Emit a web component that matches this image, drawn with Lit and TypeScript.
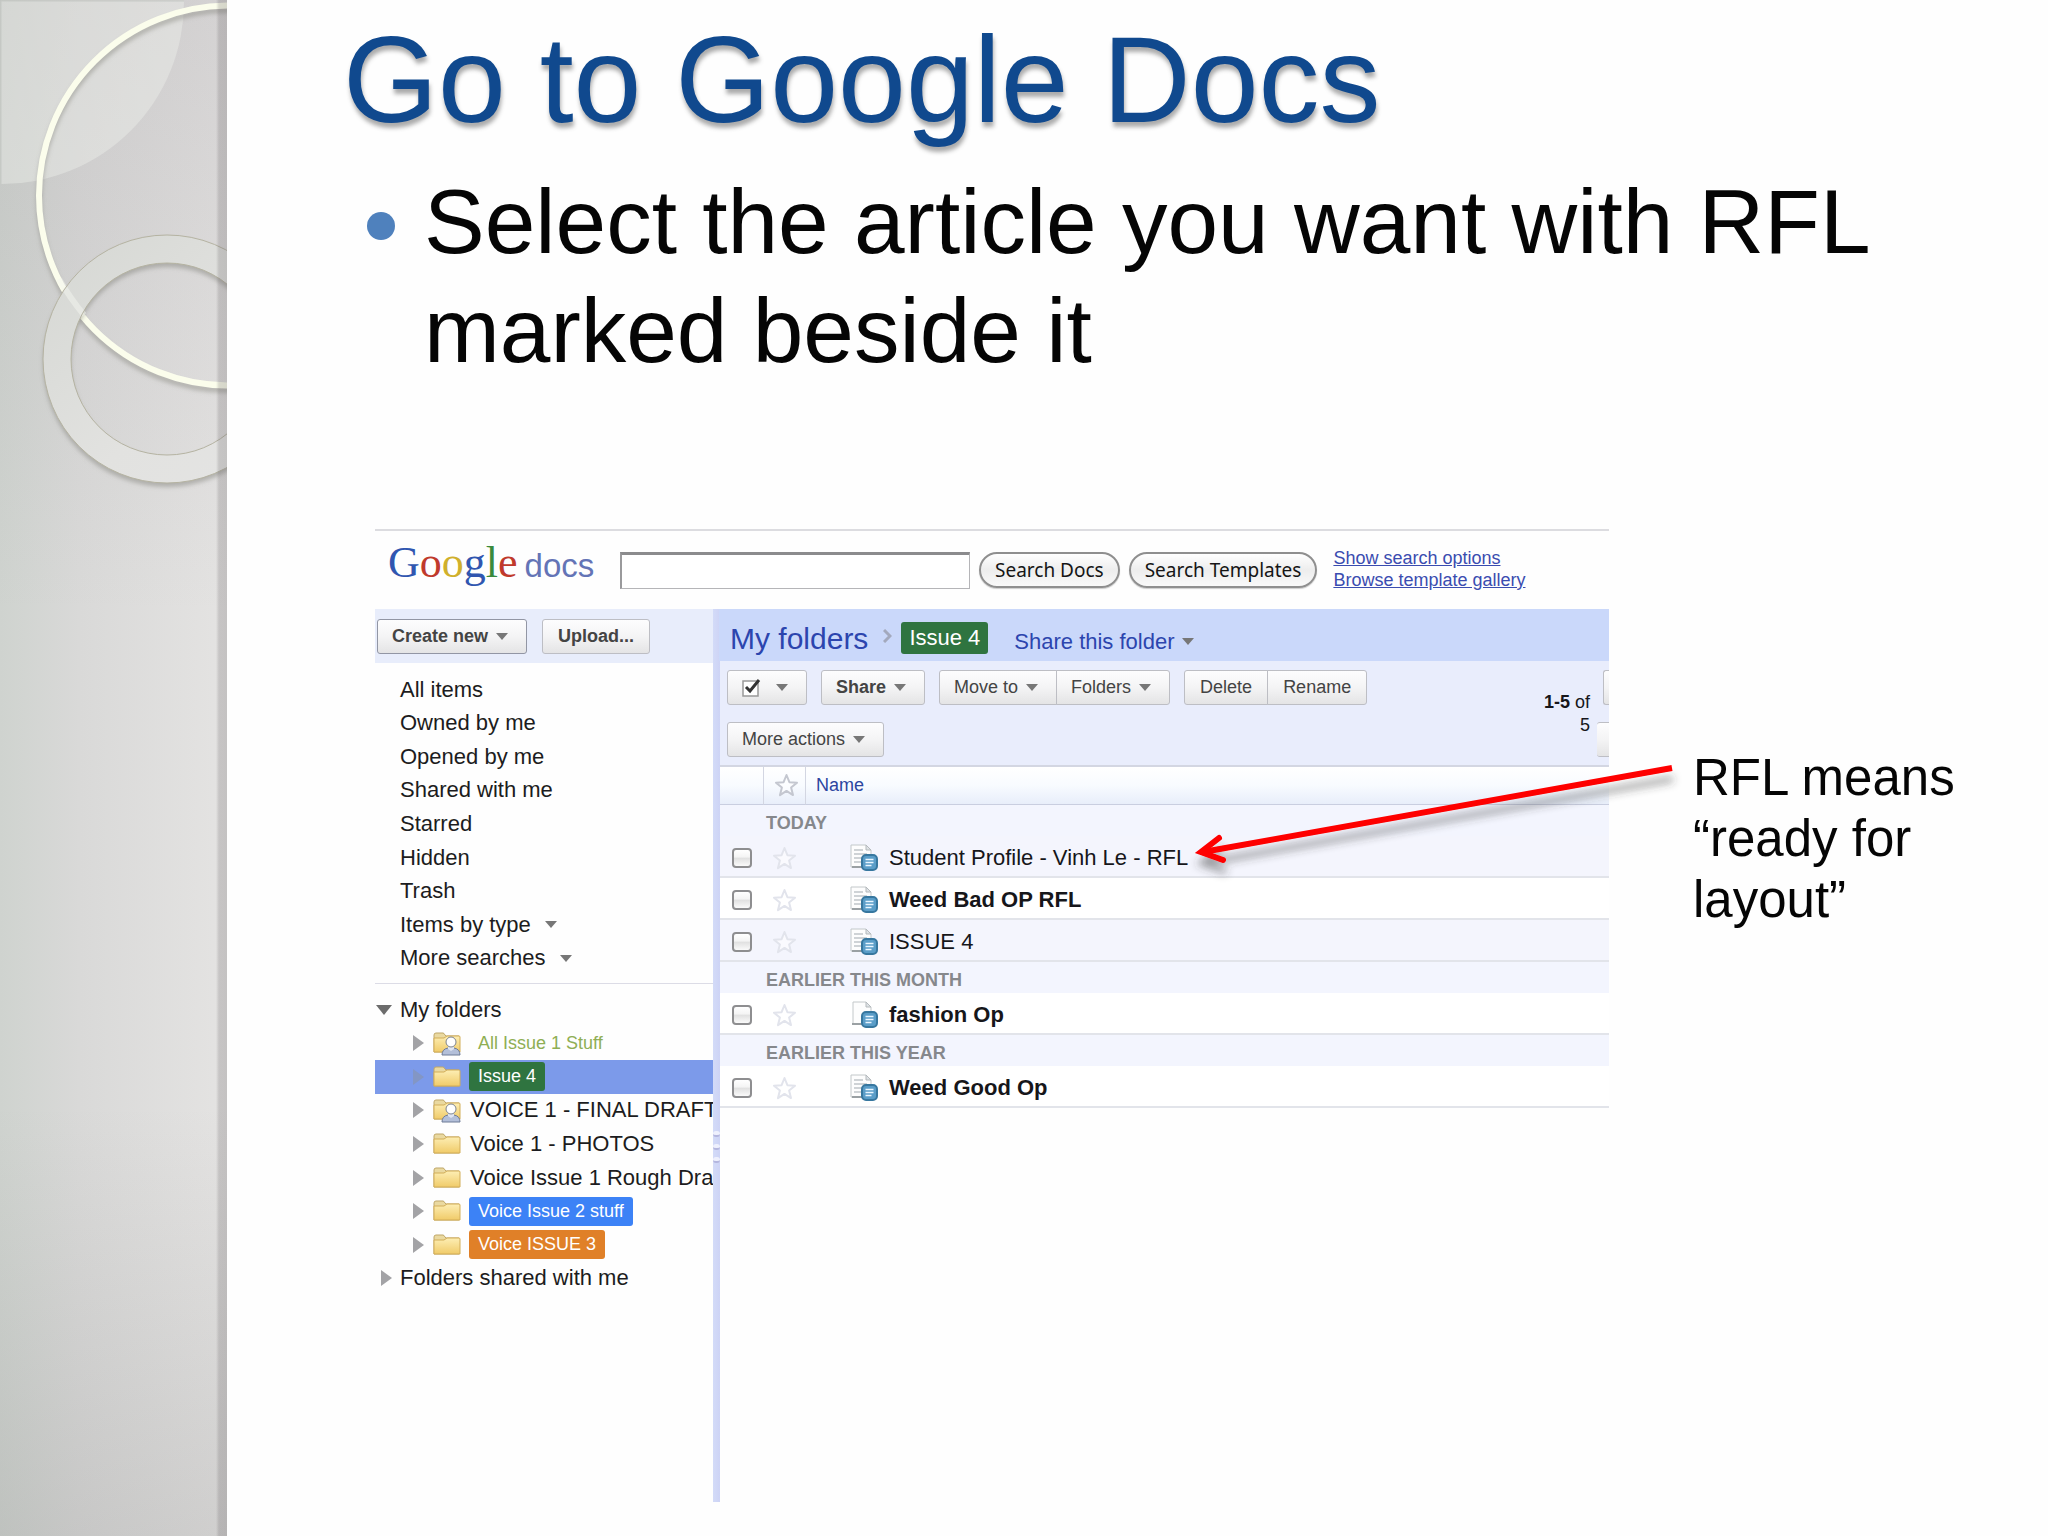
import { LitElement, html, css, svg, nothing } from "lit";
import { customElement, property } from "lit/decorators.js";
import { classMap } from "lit/directives/class-map.js";

const caret = html`<svg class="caret" width="12" height="7" viewBox="0 0 12 7" aria-hidden="true">
  <path d="M0 0h12L6 7z" fill="#777" />
</svg>`;

const star = (color: string) => html`<svg width="25" height="25" viewBox="0 0 25 25" aria-hidden="true">
  <path
    d="M12.500 2l2.900 7.200 7.600.500-5.900 4.900 1.900 7.500-6.500-4.200-6.500 4.200 1.900-7.500L2 9.700l7.600-.500z"
    fill="#fff" fill-opacity=".5" stroke=${color} stroke-width="2" stroke-linejoin="round" />
</svg>`;

@customElement("slide-rings")
export class SlideRings extends LitElement {
  static styles = css`
    :host {
      display: block;
      position: relative;
      overflow: hidden;
      background:
        linear-gradient(rgba(120, 112, 120, 0.14), transparent 40%, transparent 72%, rgba(110, 110, 110, 0.17)),
        linear-gradient(90deg, #cfd3cf, #d9d9d8 35%, #e4e3e2);
    }
    .art {
      display: block;
    }
    .shade {
      position: absolute;
      top: 0;
      right: 0;
      bottom: 0;
      width: 11px;
      background: linear-gradient(90deg, transparent, rgba(90, 85, 88, 0.21) 3px, rgba(90, 85, 88, 0.23));
    }
  `;
  render() {
    return html`<svg class="art" width="227" height="520" viewBox="0 0 227 520" aria-hidden="true">
      <defs>
        <filter id="soft" x="-20%" y="-20%" width="140%" height="140%">
          <feGaussianBlur stdDeviation="2" />
        </filter>
        <linearGradient id="band" x2="1" y2="1">
          <stop stop-color="#d6d8d4" />
          <stop offset=".6" stop-color="#e2e2e0" />
          <stop offset="1" stop-color="#e4e4e3" />
        </linearGradient>
      </defs>
      <path d="M1 1H184A182 182 0 0 1 1 184z" fill="#eef0ec" fill-opacity=".42" />
      <path d="M1 184V1H184" fill="none" stroke="#c6cac5" stroke-width="1" />
      <circle cx="229" cy="200" r="190" fill="none" stroke="#8b8b84" stroke-opacity=".5" stroke-width="6" filter="url(#soft)" />
      <circle cx="229" cy="195.500" r="190" fill="none" stroke="#fbfdec" stroke-width="6" />
      <circle cx="167" cy="363" r="110" fill="none" stroke="#85857f" stroke-opacity=".5" stroke-width="28" filter="url(#soft)" />
      <circle cx="167" cy="359" r="110" fill="none" stroke="url(#band)" stroke-width="28" />
      <path d="M59 279Q70 298 84 315" fill="none" stroke="#f4f5f0" stroke-opacity=".5" stroke-width="6" />
      <circle cx="167" cy="359" r="124" fill="none" stroke="#b5b3a2" stroke-width="1" />
      <circle cx="167" cy="359" r="96" fill="none" stroke="#b5b3a2" stroke-width="1" />
    </svg>
    <div class="shade"></div>`;
  }
}

@customElement("folder-icon")
export class FolderIcon extends LitElement {
  @property({ type: Boolean }) shared = false;
  static styles = css`
    :host {
      display: block;
      flex: none;
      width: 28px;
      height: 26px;
    }
  `;
  render() {
    return html`<svg width="28" height="26" viewBox="0 0 28 26" aria-hidden="true">
      <defs>
        <linearGradient id="f" x2="0" y2="1"><stop stop-color="#fdeeb4" /><stop offset="1" stop-color="#f0cb69" /></linearGradient>
      </defs>
      <path d="M1 22V5q0-2 2-2h7q1 0 2 2l1 1h13v16z" fill="#ead9a0" stroke="#bfa768" />
      <path d="M1 22V8h10l3-2h12q1 0 1 1v15z" fill="url(#f)" stroke="#d2ad58" />
      ${this.shared
        ? svg`<path d="M9 25q0-6 6-7h6q6 1 6 7z" fill="#b3bfd9" stroke="#6d7a96" />
            <path d="M15 16h6v3l-3 2-3-2z" fill="#dfe5f2" />
            <circle cx="18" cy="12" r="5" fill="#fff" stroke="#7c828e" />`
        : nothing}
    </svg>`;
  }
}

@customElement("doc-icon")
export class DocIcon extends LitElement {
  @property({ type: Boolean }) blank = false;
  static styles = css`
    :host {
      display: block;
      flex: none;
      width: 28px;
      height: 28px;
    }
  `;
  render() {
    return html`<svg width="28" height="28" viewBox="0 0 28 28" aria-hidden="true">
      <path d=${this.blank ? "M3 1h13l5 5v17H3z" : "M1 1h15l5 5v17H1z"} fill="#fdfdfd" stroke="#c3c8ca" />
      <path d="M16 1v5h5z" fill="#dfe3e6" stroke="#b5babd" />
      ${this.blank ? nothing : svg`<path d="M4 6h9M4 10h13M4 14h9M4 18h8" stroke="#cfd3d6" stroke-width="2" />`}
      <path d="M2 23h10" stroke="#9aa0a3" stroke-width="2" />
      <rect x="12" y="11" width="15" height="15" rx="4" fill="#5a9dc8" stroke="#37779f" stroke-width="2" />
      <path d="M15.500 15.500h8M15.500 18.500h8M15.500 21.500h6" stroke="#e9f6ff" stroke-width="1.500" />
    </svg>`;
  }
}

interface Folder {
  name: string;
  shared?: boolean;
  tag?: string;
  selected?: boolean;
}

const filters = [
  "All items", "Owned by me", "Opened by me", "Shared with me", "Starred", "Hidden", "Trash",
];
const menus = ["Items by type", "More searches"];

const folders: Folder[] = [
  { name: "All Issue 1 Stuff", shared: true, tag: "plain" },
  { name: "Issue 4", tag: "green", selected: true },
  { name: "VOICE 1 - FINAL DRAFT", shared: true },
  { name: "Voice 1 - PHOTOS" },
  { name: "Voice Issue 1 Rough Draft" },
  { name: "Voice Issue 2 stuff", tag: "blue" },
  { name: "Voice ISSUE 3", tag: "orange" },
];

const groups = [
  {
    label: "TODAY",
    rows: [
      { name: "Student Profile - Vinh Le - RFL", shade: true },
      { name: "Weed Bad OP RFL", unread: true },
      { name: "ISSUE 4", shade: true },
    ],
  },
  { label: "EARLIER THIS MONTH", rows: [{ name: "fashion Op", unread: true, blank: true }] },
  { label: "EARLIER THIS YEAR", rows: [{ name: "Weed Good Op", unread: true }] },
] as { label: string; rows: { name: string; unread?: boolean; shade?: boolean; blank?: boolean }[] }[];

@customElement("docs-window")
export class DocsWindow extends LitElement {
  static styles = css`
    :host {
      display: flex;
      flex-direction: column;
      min-width: 0;
      overflow: hidden;
      border-top: 2px solid #dcdce0;
      box-sizing: border-box;
      font-family: "Liberation Sans", Arial, sans-serif;
      font-size: 18px;
      color: #16161a;
    }
    * {
      box-sizing: border-box;
    }
    a {
      color: inherit;
      text-decoration: none;
    }
    svg {
      display: block;
      flex: none;
    }
    button {
      font: inherit;
      color: #444;
      margin: 0;
      white-space: nowrap;
    }
    ul {
      list-style: none;
      margin: 0;
      padding: 0;
    }
    .top {
      display: flex;
      align-items: center;
      height: 78px;
      padding: 0 12px 0 13px;
    }
    .logo {
      display: flex;
      align-items: baseline;
      gap: 7px;
      width: 232px;
      line-height: 50px;
      padding-bottom: 12px;
    }
    .google {
      font-family: "Liberation Serif", "Times New Roman", serif;
      font-size: 44px;
    }
    .b { color: #3056b0; }
    .r { color: #c03a2c; }
    .y { color: #d0b02c; }
    .g { color: #3a8a3c; }
    .product {
      font-size: 33px;
      color: #6474b6;
    }
    .search {
      flex: 0 1 350px;
      min-width: 0;
      height: 37px;
      padding: 0 8px;
      border: 1px solid #b5b5b8;
      border-top: 3px solid #8b8b8d;
      border-left: 2px solid #9a9a9c;
      background: #fff;
      font: inherit;
      font-size: 22px;
    }
    .pill {
      height: 36px;
      margin-left: 9px;
      padding: 0 14px;
      border: 2px solid #8f8f8f;
      border-radius: 18px;
      background: linear-gradient(#fff, #ededed 50%, #f9f9f9);
      font-family: "Noto Sans", "Open Sans", sans-serif;
      font-size: 19px;
      line-height: 24px;
      color: #151515;
      box-shadow: 0 1px 1px #ccc;
    }
    .links {
      margin-left: 16px;
      padding-bottom: 2px;
      line-height: 22px;
      color: #3a4cb0;
      display: flex;
      flex-direction: column;
      white-space: nowrap;
    }
    .links a {
      text-decoration: underline;
    }
    .body {
      flex: 1;
      display: grid;
      grid-template-columns: 338px 7px minmax(0, 1fr);
    }
    .side {
      min-width: 0;
    }
    .create {
      display: flex;
      align-items: center;
      gap: 15px;
      height: 54px;
      padding: 0 2px;
      background: #e8edfb;
      font-weight: bold;
    }
    .btn {
      display: flex;
      align-items: center;
      gap: 8px;
      height: 35px;
      padding: 0 15px;
      border: 1px solid #bdbec4;
      border-radius: 3px;
      background: linear-gradient(#fdfdfe, #f4f4f5 50%, #e4e4e5);
    }
    .btn.menu {
      padding: 0 18px 0 14px;
    }
    .btn.strong {
      font-weight: bold;
    }
    .btn.dark {
      border-color: #9296a4;
    }
    .nav {
      display: grid;
      grid-auto-rows: 1fr;
      min-height: 302px;
      line-height: 28px;
      font-size: 22px;
      color: #1c1c20;
    }
    .filters {
      margin-top: 10px;
      padding-left: 25px;
      white-space: nowrap;
    }
    .filters li,
    .filters button {
      display: flex;
      align-items: center;
      gap: 14px;
    }
    .filters button {
      padding: 0;
      border: 0;
      background: none;
      color: inherit;
    }
    .rule {
      margin: 8px 0 9px;
      border: 0;
      border-top: 1px solid #dcdce6;
    }
    .node {
      display: flex;
      align-items: center;
      overflow: hidden;
      white-space: nowrap;
    }
    .twist {
      display: flex;
      width: 25px;
      padding: 0 0 0 1px;
      border: 0;
      background: none;
      flex: none;
    }
    .twist.shut {
      padding-left: 6px;
    }
    .child {
      padding-left: 32px;
    }
    .child .twist {
      width: 26px;
    }
    .child .name {
      margin-left: 9px;
    }
    .picked {
      background: #7c9aea;
    }
    .child .tag {
      display: block;
      margin-left: 8px;
      padding: 0 9px;
      border-radius: 3px;
      font-size: 18px;
      line-height: 29px;
      color: #fff;
    }
    .plain.tag { color: #8fae54; }
    .green.tag { background: #2f7440; }
    .blue.tag { background: #3c82f6; }
    .orange.tag { background: #e08028; }
    .split {
      display: flex;
      justify-content: center;
      background: linear-gradient(90deg, #d3dbf8, #cdd3f5);
      padding-top: 522px;
    }
    .grip {
      display: flex;
      flex-direction: column;
      gap: 7px;
    }
    .dot {
      width: 7px;
      height: 6px;
      border-radius: 3px;
      background: #eef0fd;
      border-bottom: 2px solid #b4b6de;
    }
    .main {
      min-width: 0;
    }
    .crumbs {
      display: flex;
      align-items: center;
      height: 52px;
      margin-left: -1px;
      padding: 8px 0 0 11px;
      background: #cad8fa;
      color: #2c45ae;
      white-space: nowrap;
    }
    .folder {
      font-size: 30px;
      line-height: 40px;
    }
    .chev {
      margin: 0 9px 6px 15px;
    }
    .crumb {
      padding: 0 8px;
      border-radius: 3px;
      background: #2f7440;
      color: #fff;
      font-size: 22px;
      line-height: 32px;
      margin-bottom: 2px;
    }
    .share {
      display: flex;
      align-items: center;
      gap: 7px;
      margin-left: 26px;
      padding: 5px 0 0;
      border: 0;
      background: none;
      color: #2c45ae;
      font-size: 22px;
    }
    .tools {
      display: flex;
      justify-content: space-between;
      height: 104px;
      padding: 9px 0 0 7px;
      background: #e9edfc;
      overflow: hidden;
    }
    .rows {
      display: flex;
      flex-direction: column;
      gap: 17px;
    }
    .line,
    .pair {
      display: flex;
    }
    .line {
      gap: 14px;
    }
    .pair .btn + .btn {
      margin-left: -1px;
      border-radius: 0 3px 3px 0;
    }
    .pair .btn:first-child {
      border-radius: 3px 0 0 3px;
    }
    .all {
      gap: 15px;
    }
    .right {
      display: flex;
      gap: 7px;
    }
    .count {
      width: 60px;
      margin: 21px 0 0;
      line-height: 23px;
      text-align: right;
    }
    .cut {
      display: flex;
      flex-direction: column;
      align-items: flex-end;
      gap: 17px;
      width: 12px;
    }
    .edge {
      width: 6px;
      padding: 0;
      border-right: 0;
      border-radius: 3px 0 0 3px;
    }
    .edge.wide {
      width: 12px;
      border-left: 0;
    }
    table {
      width: 100%;
      table-layout: fixed;
      border-spacing: 0;
      border-collapse: separate;
    }
    .pick { width: 43px; }
    .mark { width: 42px; }
    th,
    td {
      padding: 0;
      text-align: left;
      vertical-align: middle;
    }
    thead th {
      height: 40px;
      border-top: 2px solid #d3d6e2;
      border-bottom: 1px solid #c9cee0;
      background: linear-gradient(#fff, #f8fbff 50%, #e8eefa);
      font-weight: normal;
      color: #2c45a0;
    }
    thead th + th {
      border-left: 1px solid #d3d6e2;
    }
    thead .star {
      padding-left: 10px;
    }
    thead .title {
      padding-left: 10px;
    }
    .group th {
      height: 31px;
      padding: 5px 0 0 46px;
      background: #f3f5fe;
      color: #86888c;
    }
    .item td {
      height: 42px;
      padding-top: 4px;
      border-bottom: 2px solid #e2e4ea;
      background: #fff;
    }
    .item.shade td {
      background: #f4f5fd;
    }
    .item .star {
      padding-left: 9px;
    }
    .star button {
      display: block;
      padding: 0;
      border: 0;
      background: none;
    }
    .tick {
      appearance: none;
      display: block;
      width: 20px;
      height: 20px;
      margin: 0 0 0 12px;
      border: 2px solid #8e8e90;
      border-radius: 4px;
      background: linear-gradient(#fff, #f4f4f4 45%, #e0e0e0 50%, #fafafa);
    }
    .entry {
      display: flex;
      align-items: center;
      gap: 11px;
      padding-left: 45px;
      font-size: 22px;
      line-height: 28px;
      color: #16161a;
      white-space: nowrap;
    }
    .unread .entry {
      font-weight: bold;
    }
  `;

  private twist(open: boolean, label: string, faint = false) {
    return html`<button class=${classMap({ twist: true, shut: !open })} aria-label=${label}>
      ${open
        ? html`<svg width="16" height="10" viewBox="0 0 16 10"><path d="M0 0h16L8 10z" fill="#6c6c6c" /></svg>`
        : html`<svg width="11" height="16" viewBox="0 0 11 16">
            <path d="M0 0L11 8L0 16z" fill=${faint ? "#8396c4" : "#a3a3a6"} />
          </svg>`}
    </button>`;
  }

  render() {
    return html`
      <header class="top">
        <div class="logo">
          <span class="google"><span class="b">G</span><span class="r">o</span><span class="y">o</span><span class="b">g</span><span class="g">l</span><span class="r">e</span></span>
          <span class="product">docs</span>
        </div>
        <input class="search" type="text" aria-label="Search" />
        <button class="pill">Search Docs</button>
        <button class="pill">Search Templates</button>
        <nav class="links">
          <a href="#options">Show search options</a>
          <a href="#gallery">Browse template gallery</a>
        </nav>
      </header>
      <div class="body">
        <aside class="side">
          <div class="create">
            <button class="btn menu strong dark">Create new ${caret}</button>
            <button class="btn strong">Upload...</button>
          </div>
          <ul class="nav filters">
            ${filters.map((f) => html`<li><a href="#items">${f}</a></li>`)}
            ${menus.map((m) => html`<li><button>${m} ${caret}</button></li>`)}
          </ul>
          <hr class="rule" />
          <ul class="nav">
            <li class="node">${this.twist(true, "Collapse My folders")}<a href="#mine">My folders</a></li>
            ${folders.map(
              (f) => html`<li class=${classMap({ node: true, child: true, picked: !!f.selected })}>
                ${this.twist(false, `Expand ${f.name}`, f.selected)}
                <folder-icon ?shared=${f.shared}></folder-icon>
                <a href="#folder" class=${f.tag ? `tag ${f.tag}` : "name"}>${f.name}</a>
              </li>`
            )}
            <li class="node">${this.twist(false, "Expand Folders shared with me")}<a href="#shared">Folders shared with me</a></li>
          </ul>
        </aside>
        <div class="split">
          <div class="grip"><span class="dot"></span><span class="dot"></span><span class="dot"></span></div>
        </div>
        <section class="main">
          <div class="crumbs">
            <a class="folder" href="#mine">My folders</a>
            <svg class="chev" width="9" height="14" viewBox="0 0 9 14"><path d="M1 1l6 6-6 6" fill="none" stroke="#a3a9bd" stroke-width="3" /></svg>
            <a class="crumb" href="#folder">Issue 4</a>
            <button class="share">Share this folder ${caret}</button>
          </div>
          <div class="tools">
            <div class="rows">
              <div class="line">
                <button class="btn menu all" aria-label="Select">
                  <svg width="19" height="19" viewBox="0 0 19 19">
                    <rect x="1" y="3" width="15" height="15" fill="#fff" stroke="#999" stroke-width="1.500" />
                    <path d="M4 9l4 4 9-11" fill="none" stroke="#333" stroke-width="3" />
                  </svg>
                  ${caret}
                </button>
                <button class="btn menu strong">Share ${caret}</button>
                <div class="pair">
                  <button class="btn menu">Move to ${caret}</button>
                  <button class="btn menu">Folders ${caret}</button>
                </div>
                <div class="pair">
                  <button class="btn">Delete</button>
                  <button class="btn">Rename</button>
                </div>
              </div>
              <div class="line"><button class="btn menu">More actions ${caret}</button></div>
            </div>
            <div class="right">
              <p class="count"><b>1-5</b> of 5</p>
              <div class="cut">
                <button class="btn edge" aria-label="Newer"></button>
                <button class="btn edge wide" aria-label="Older"></button>
              </div>
            </div>
          </div>
          <table>
            <colgroup><col class="pick" /><col class="mark" /><col /></colgroup>
            <thead>
              <tr>
                <th></th>
                <th class="star">${star("#c4c7d0")}</th>
                <th class="title">Name</th>
              </tr>
            </thead>
            ${groups.map(
              (g) => html`<tbody>
                <tr class="group"><th colspan="3">${g.label}</th></tr>
                ${g.rows.map(
                  (r) => html`<tr class=${classMap({ item: true, unread: !!r.unread, shade: !!r.shade })}>
                    <td><input class="tick" type="checkbox" aria-label=${r.name} /></td>
                    <td class="star"><button aria-label="Star ${r.name}">${star("#e2e4ec")}</button></td>
                    <td><a class="entry" href="#doc"><doc-icon ?blank=${r.blank}></doc-icon>${r.name}</a></td>
                  </tr>`
                )}
              </tbody>`
            )}
          </table>
        </section>
      </div>
    `;
  }
}

@customElement("app-root")
export class AppRoot extends LitElement {
  static styles = css`
    :host {
      display: grid;
      grid-template-columns: 227px minmax(0, 1fr);
      min-height: 100vh;
      background: #fefefe;
      font-family: "Liberation Sans", Arial, sans-serif;
      color: #050505;
    }
    .slide {
      display: flex;
      flex-direction: column;
      min-width: 0;
      box-sizing: border-box;
      padding: 10px 66px 34px 116px;
    }
    h1 {
      margin: 0;
      font-size: 122px;
      line-height: 140px;
      font-weight: normal;
      color: #10498e;
      text-shadow: 1px 5px 4px rgba(70, 70, 70, 0.45);
    }
    .points {
      margin: 17px 0 0;
      padding: 0 0 0 24px;
      list-style: none;
      font-size: 91px;
      line-height: 109px;
    }
    .point {
      display: flex;
      gap: 29px;
    }
    .bullet {
      flex: none;
      width: 28px;
      height: 28px;
      margin-top: 45px;
      border-radius: 50%;
      background: #4f81bd;
    }
    .figure {
      flex: 1;
      display: grid;
      grid-template-columns: minmax(0, 1fr) 289px;
      column-gap: 84px;
      margin: 144px 0 0 32px;
    }
    .note {
      position: relative;
      padding-top: 218px;
      font-size: 51px;
      line-height: 61px;
    }
    .arrow {
      position: absolute;
      top: 219px;
      right: 100%;
    }
  `;

  render() {
    return html`
      <slide-rings></slide-rings>
      <main class="slide">
        <h1>Go to Google Docs</h1>
        <ul class="points">
          <li class="point"><span class="bullet"></span><span>Select the article you want with RFL marked beside it</span></li>
        </ul>
        <div class="figure">
          <docs-window></docs-window>
          <div class="note">
            <svg class="arrow" width="510" height="140" viewBox="0 0 510 140" aria-hidden="true">
              <defs>
                <filter id="shade" x="-5%" y="-20%" width="110%" height="150%">
                  <feDropShadow dx="1" dy="11" stdDeviation="4" flood-color="#333" flood-opacity=".45" />
                </filter>
              </defs>
              <g filter="url(#shade)" fill="none" stroke="#fe0000" stroke-width="6">
                <path d="M489 20L20 104" />
                <path d="M36 90L18 104L40 112" stroke-linecap="round" stroke-linejoin="miter" />
              </g>
            </svg>
            RFL means “ready for layout”
          </div>
        </div>
      </main>
    `;
  }
}
